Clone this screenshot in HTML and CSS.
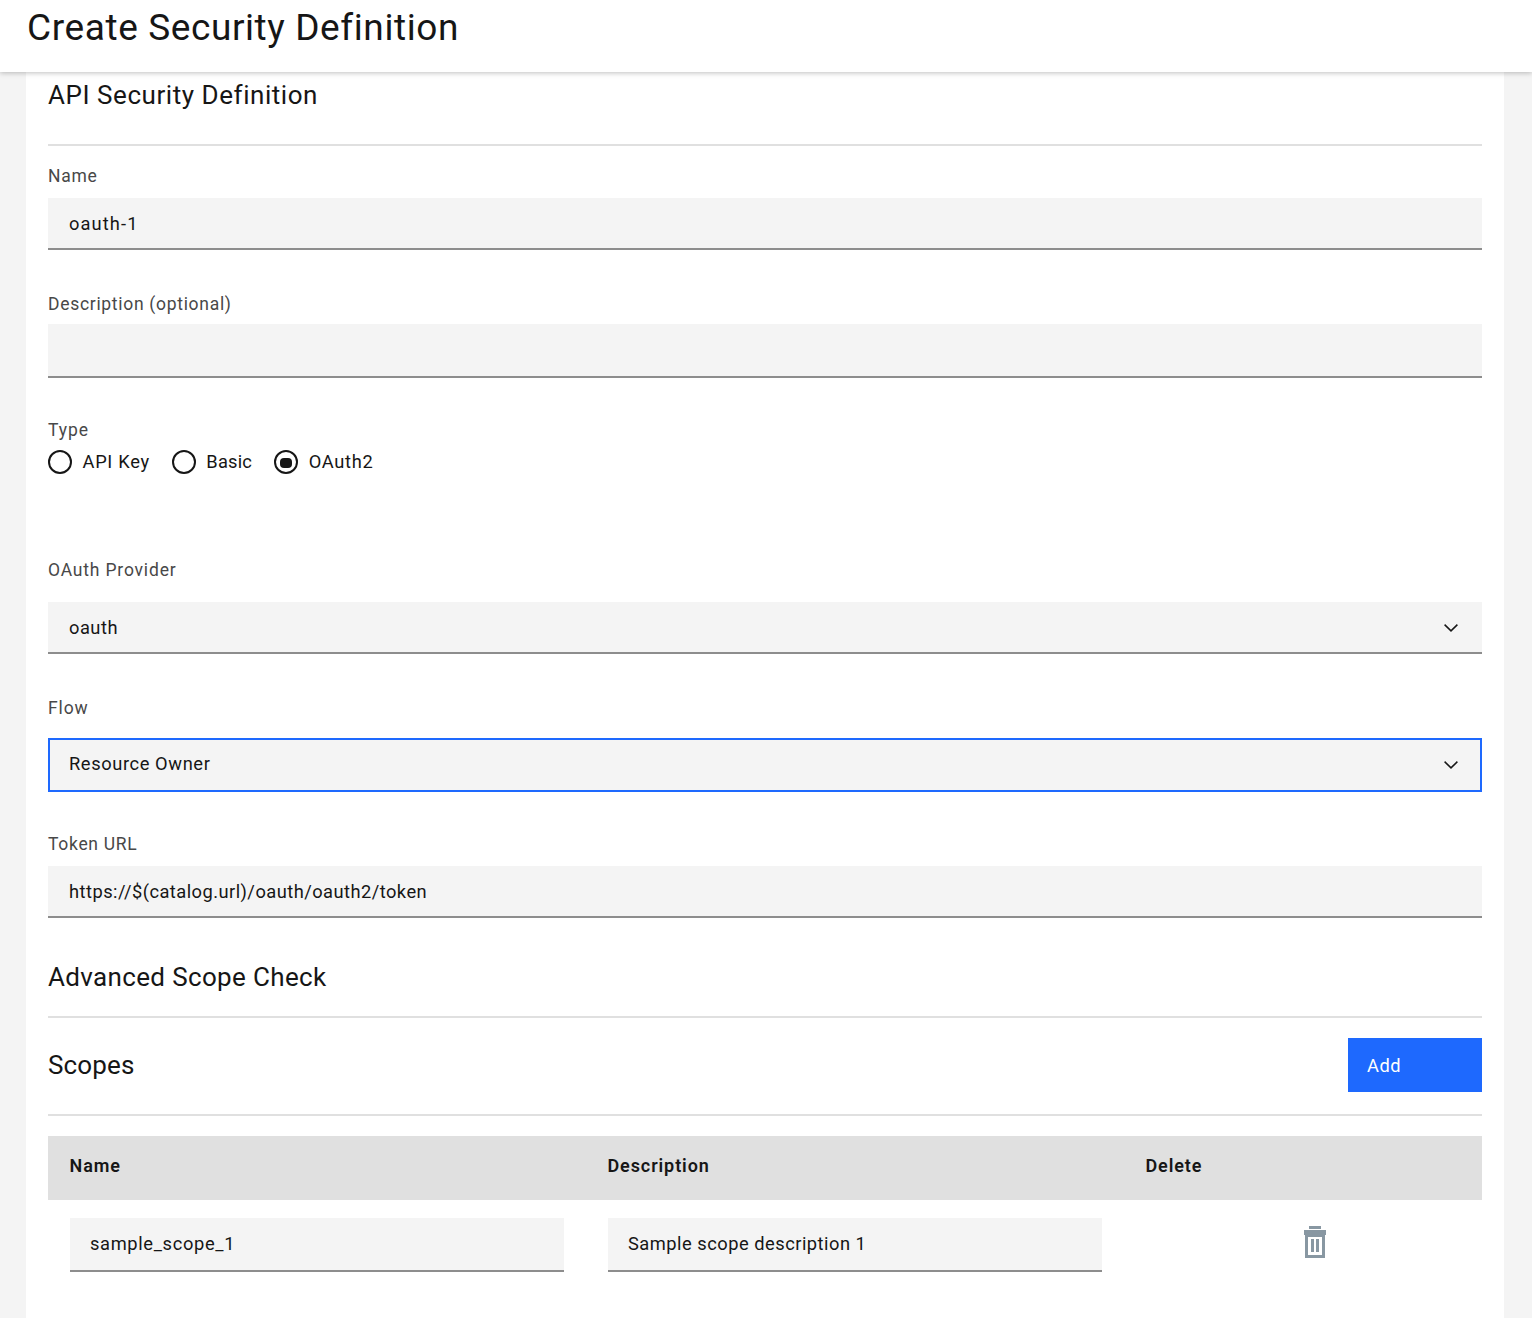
FILE: index.html
```html
<!DOCTYPE html>
<html lang="en">
<head>
<meta charset="utf-8">
<title>Create Security Definition</title>
<link rel="stylesheet" href="styles.css">
</head>
<body>
<header class="header"><h1 class="title">Create Security Definition</h1></header>
<main class="panel">
  <h2 class="section api">API Security Definition</h2>
  <div class="label name-label">Name</div>
  <div class="field"><span class="t-name">oauth-1</span></div>
  <div class="label desc-label">Description (optional)</div>
  <div class="field tall"></div>
  <div class="label type-label">Type</div>
  <div class="radios">
    <div class="radio"><i class="dot"></i><span class="t-api">API Key</span></div>
    <div class="radio"><i class="dot"></i><span class="t-basic">Basic</span></div>
    <div class="radio"><i class="dot checked"></i><span>OAuth2</span></div>
  </div>
  <div class="label provider-label">OAuth Provider</div>
  <div class="field"><span>oauth</span>
    <svg class="chevron" width="16" height="10" viewBox="0 0 16 10"><path d="M1.6 1.6 8 7.9l6.4-6.3" fill="none" stroke="#161616" stroke-width="1.5"/></svg></div>
  <div class="label flow-label">Flow</div>
  <div class="field focus"><span class="t-flow">Resource Owner</span>
    <svg class="chevron" width="16" height="10" viewBox="0 0 16 10"><path d="M1.6 1.6 8 7.9l6.4-6.3" fill="none" stroke="#161616" stroke-width="1.5"/></svg></div>
  <div class="label token-label">Token URL</div>
  <div class="field"><span class="t-url">https://$(catalog.url)/oauth/oauth2/token</span></div>
  <h2 class="section advanced">Advanced Scope Check</h2>
  <div class="section scopes"><h2>Scopes</h2><button class="add">Add</button></div>
  <div class="table">
    <div class="row head"><span>Name</span><span>Description</span><span>Delete</span></div>
    <div class="row">
      <div class="field tall cell"><span class="t-scope">sample_scope_1</span></div>
      <div class="field tall cell"><span>Sample scope description 1</span></div>
      <svg class="trash" width="22" height="32" viewBox="0 0 22 32"><path fill="#8897a2" fill-rule="evenodd" d="M5 0h12v3H5zM0 4h22v5h-1v23H1V9H0zM4 11v18h14V11zM7 13h3v13H7zM12 13h3v13h-3z"/></svg>
    </div>
  </div>
</main>
</body>
</html>
```
FILE: styles.css
```css
* { box-sizing: border-box; }
body { margin: 0; background: #f4f4f4; color: #161616; font-family: Roboto, "Liberation Sans", sans-serif; height: 1318px; overflow: hidden; }
h1, h2 { margin: 0; font-weight: 400; }
.header { position: relative; height: 72px; padding-left: 27px; background: #fff; box-shadow: 0 1px 5px rgba(0, 0, 0, .25); }
.title { padding-top: 1px; font-size: 37px; line-height: 54px; letter-spacing: .6px; }
.panel { height: 1246px; margin: 0 28px 0 26px; padding: 0 22px; background: #fff; }
.section { font-size: 26px; border-bottom: 2px solid #e0e0e0; }
.api { height: 74px; line-height: 46px; letter-spacing: .55px; }
.label { height: 24px; color: #484848; font-size: 17.5px; line-height: 24px; letter-spacing: .7px; }
.field { display: flex; align-items: center; justify-content: space-between; height: 52px; padding: 0 23px 0 21px; background: #f4f4f4; border-bottom: 2px solid #8d8d8d; font-size: 18.3px; letter-spacing: .5px; }
.tall { height: 54px; }
.focus { height: 54px; padding: 0 21px 2px 19px; border: 2px solid #1e69fe; }
.cell { padding: 0 20px 2px; }
.chevron { position: relative; top: 1px; }
.t-name { letter-spacing: 1.1px; }
.t-flow { padding-bottom: 2px; letter-spacing: .6px; }
.t-url { letter-spacing: .46px; }
.t-scope { letter-spacing: .65px; }
.name-label { margin: 18px 0 10px; }
.desc-label { margin: 42px 0 8px; }
.type-label { margin: 40px 0 8px; letter-spacing: .9px; }
.radios { display: flex; gap: 22px; height: 24px; }
.radio { display: flex; gap: 10.5px; font-size: 18.3px; line-height: 24px; letter-spacing: .68px; white-space: nowrap; }
.t-api { letter-spacing: .7px; }
.t-basic { letter-spacing: .2px; }
.dot { display: grid; place-items: center; width: 24px; height: 24px; border: 2px solid #161616; border-radius: 50%; }
.checked::before { content: ""; width: 12px; height: 10px; margin-top: 2px; border-radius: 4px; background: #161616; }
.provider-label { margin: 84px 0 20px; letter-spacing: .82px; }
.flow-label { margin: 42px 0 18px; letter-spacing: .9px; }
.token-label { margin: 40px 0 10px; }
.advanced { height: 66px; margin-top: 34px; line-height: 50px; letter-spacing: .35px; }
.scopes { display: flex; justify-content: space-between; height: 98px; padding-top: 20px; line-height: 54px; }
.scopes h2 { font-size: 26px; letter-spacing: .15px; }
.add { width: 134px; height: 54px; padding: 0 0 0 19px; border: 0; background: #1e69fe; color: #fff; text-align: left; font: 400 18.3px Roboto, sans-serif; letter-spacing: .5px; }
.table { margin-top: 20px; }
.row { display: grid; grid-template-columns: 494px 494px 1fr; column-gap: 44px; padding: 18px 22px 0; }
.head { height: 64px; padding-left: 21.5px; background: #e0e0e0; font-weight: 600; font-size: 18px; line-height: 24px; letter-spacing: .9px; }
.trash { margin: 8px 0 0 158px; }
```
